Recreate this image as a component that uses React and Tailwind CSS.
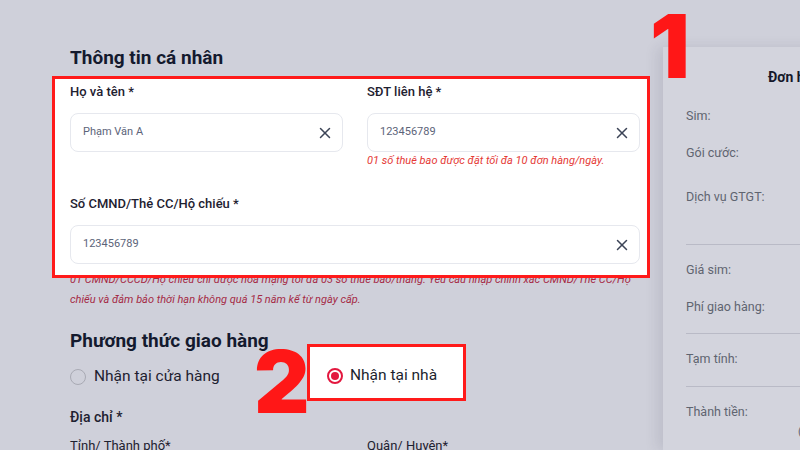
import { X } from 'lucide-react';

const font = { fontFamily: 'Roboto, "Noto Sans", sans-serif' };

function Field({ label, value, helper, className = '' }) {
    return (
        <div className={className}>
            <div className="text-[13px] leading-5 font-medium text-[#1e2130]">{label}</div>
            <div className="mt-[11px] h-[39px] rounded-lg border border-[#e6e8ee] bg-white flex items-center pl-[12px] pr-[8px]">
                <span className="flex-1 text-[11px] text-[#5c6479]">{value}</span>
                <X size={18} strokeWidth={2} className="text-[#3c4457]" />
            </div>
            {helper && (
                <div className="mt-[1px] text-[11px] leading-4 italic text-[#e53935]">{helper}</div>
            )}
        </div>
    );
}

function Radio({ checked }) {
    if (checked) {
        return (
            <span className="w-[16px] h-[16px] rounded-full border-2 border-[#e3173e] flex items-center justify-center">
                <span className="w-[8px] h-[8px] rounded-full bg-[#e3173e]" />
            </span>
        );
    }
    return <span className="w-[16px] h-[16px] rounded-full border-[1.5px] border-[#a9aab4]" />;
}

const summary = [
    { label: 'Sim:', mt: 'mt-[19px]' },
    { label: 'Gói cước:', mt: 'mt-[17px]' },
    { label: 'Dịch vụ GTGT:', mt: 'mt-[24px]' },
];

export default function App() {
    return (
        <div style={font} className="relative w-[800px] h-[450px] overflow-hidden bg-[#cfd0da] flex">
            <main className="w-[663px] shrink-0 pl-[70px] pr-[23px] pt-[44px]">
                <h2 className="text-[19px] leading-7 font-bold text-[#141a2e]">Thông tin cá nhân</h2>

                <section className="relative z-10 mt-[4px] -ml-[18px] -mr-[10px] bg-white border-[3px] border-[#ff1a1a] pl-[15px] pr-[7px] pt-[3px] pb-[11px]">
                    <div className="grid grid-cols-2 gap-x-[24px]">
                        <Field label="Họ và tên *" value="Phạm Văn A" />
                        <Field
                            label="SĐT liên hệ *"
                            value="123456789"
                            helper="01 số thuê bao được đặt tối đa 10 đơn hàng/ngày."
                        />
                    </div>
                    <Field className="mt-[25px]" label="Số CMND/Thẻ CC/Hộ chiếu *" value="123456789" />
                </section>

                <p className="-mt-[8px] text-[11px] leading-[20px] italic text-[#a52a45]">
                    01 CMND/CCCD/Hộ chiếu chỉ được hòa mạng tối đa 03 số thuê bao/tháng. Yêu cầu nhập chính xác CMND/Thẻ CC/Hộ
                    chiếu và đảm bảo thời hạn không quá 15 năm kể từ ngày cấp.
                </p>

                <h2 className="mt-[17px] text-[19px] leading-7 font-bold text-[#141a2e]">Phương thức giao hàng</h2>

                <div className="-mt-[11px] h-[57px] flex">
                    <label className="w-[237px] pt-[9px] flex items-center gap-[8px] text-[15.5px] text-[#1e2130]">
                        <Radio />
                        Nhận tại cửa hàng
                    </label>
                    <label className="w-[159px] bg-white border-[3px] border-[#ff1a1a] pl-[17px] pt-[6px] flex items-center gap-[7px] text-[15.5px] text-[#1c1f2e]">
                        <Radio checked />
                        Nhận tại nhà
                    </label>
                </div>

                <div className="mt-[6px] text-[14px] leading-5 font-medium text-[#1e2130]">Địa chỉ *</div>
                <div className="mt-[9px] grid grid-cols-2 gap-x-[24px] text-[13px] leading-5 text-[#1e2130]">
                    <span>Tỉnh/ Thành phố*</span>
                    <span>Quận/ Huyện*</span>
                </div>
            </main>

            <aside className="mt-[47px] flex-1 bg-[#d3d4dd] shadow-[-6px_0_12px_rgba(40,40,70,0.10)] pl-[23px] pt-[20px] text-[12.5px] leading-5 text-[#5f6470]">
                <div className="pl-[82px] text-[14px] font-bold text-[#15182a] whitespace-nowrap">Đơn hàng</div>
                {summary.map((row) => (
                    <div key={row.label} className={`${row.mt} whitespace-nowrap`}>{row.label}</div>
                ))}
                <div className="mt-[37px] h-px bg-[#b9bac6]" />
                <div className="mt-[15px] whitespace-nowrap">Giá sim:</div>
                <div className="mt-[17px] whitespace-nowrap">Phí giao hàng:</div>
                <div className="mt-[16px] h-px bg-[#b9bac6]" />
                <div className="mt-[15px] whitespace-nowrap">Tạm tính:</div>
                <div className="mt-[17px] h-px bg-[#b9bac6]" />
                <div className="mt-[15px] whitespace-nowrap">Thành tiền:</div>
                <div className="pl-[112px] text-[11px] whitespace-nowrap">(Đã bao gồm VAT)</div>
            </aside>

            <span
                style={{ fontFamily: 'Inter, sans-serif' }}
                className="absolute left-[650px] top-[2px] text-[88px] leading-none font-black text-[#ff1717]"
            >
                1
            </span>
            <span
                style={{ fontFamily: 'Inter, sans-serif' }}
                className="absolute left-[254px] top-[339px] text-[86px] leading-none font-black text-[#ff1717]"
            >
                2
            </span>
        </div>
    );
}
